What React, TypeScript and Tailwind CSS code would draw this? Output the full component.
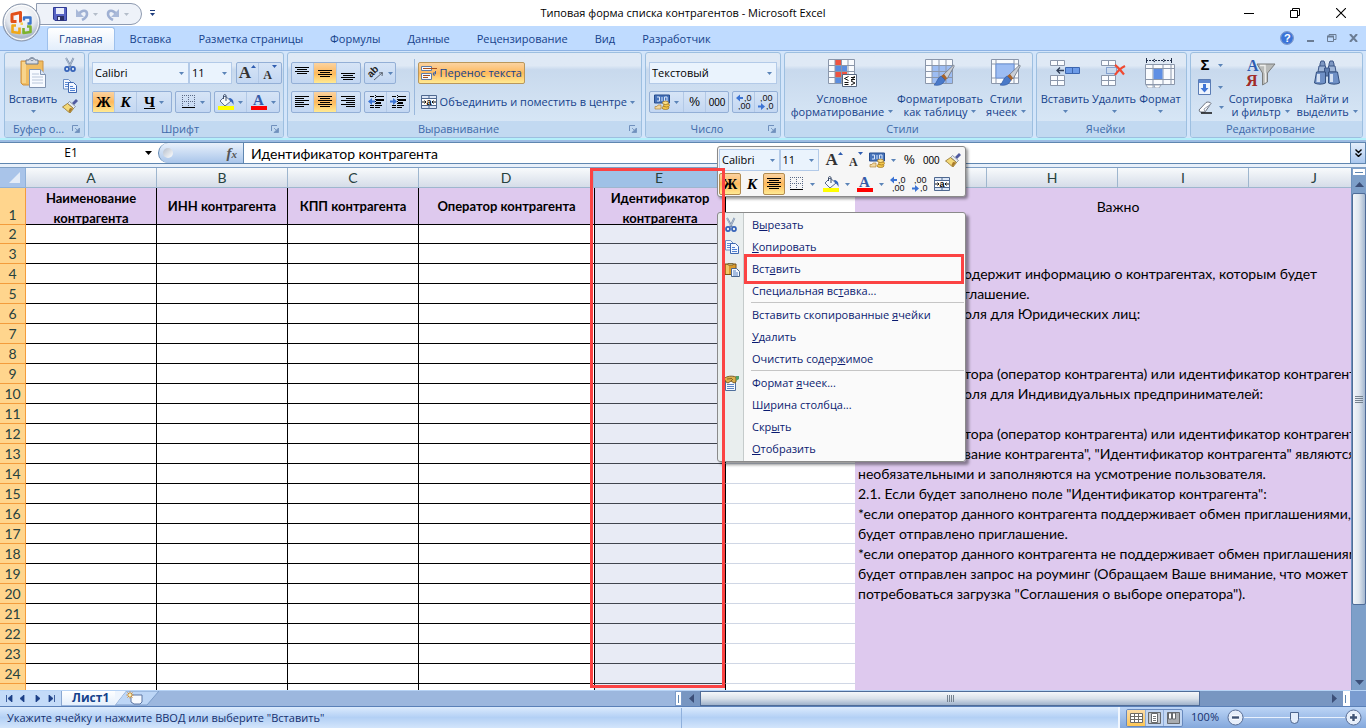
import type { ReactNode } from "react";
import clsx from "clsx";

/* ---------- Icons ---------- */

function Arrow({ className = "text-[#5b84b8]" }: { className?: string }) {
  return (
    <svg width="5" height="3" viewBox="0 0 5 3" className={clsx("shrink-0", className)}>
      <path d="M0 0h5L2.500 3z" fill="currentColor" />
    </svg>
  );
}

function OfficeLogo() {
  return (
    <svg width="39" height="39" viewBox="0 0 39 39">
      <defs>
        <radialGradient id="orb" cx="50%" cy="30%" r="75%">
          <stop offset="0" stopColor="#ffffff" />
          <stop offset="0.550" stopColor="#e3e7ee" />
          <stop offset="0.800" stopColor="#aab6c9" />
          <stop offset="1" stopColor="#f2f5fa" />
        </radialGradient>
      </defs>
      <circle cx="19.500" cy="19.500" r="18.500" fill="url(#orb)" stroke="#8592a8" />
      <circle cx="19.500" cy="19.500" r="17" fill="none" stroke="#fff" />
      <g fill="none" strokeLinejoin="round">
        <path d="M14.500 18.500h-4.500v-7l8.500-2v8.500h-1.500" stroke="#e2501a" strokeWidth="3" />
        <path d="M22 17.500v-3h6.500v6h-3" stroke="#3a74c9" strokeWidth="2.400" />
        <path d="M14 22.500h-3.500v6.500l7 1v-5.500" stroke="#f0a818" strokeWidth="2.600" />
        <path d="M21.500 25v5l7-1v-5.500h-3.500" stroke="#7db32e" strokeWidth="2.600" />
      </g>
      <path d="M18.500 19.500h2.500v2.500h-2.500z" fill="#f7d257" />
    </svg>
  );
}

function SaveIcon() {
  return (
    <svg width="14" height="14" viewBox="0 0 14 14">
      <path d="M.5.5h13v13H2L.5 12z" fill="#5763c4" stroke="#2f3a94" />
      <path d="M3 1h8v6H3z" fill="#e9edfb" />
      <path d="M4 9h7v4.500H4z" fill="#2b2f66" />
      <path d="M5 10h2v3H5z" fill="#dfe5f7" />
    </svg>
  );
}

function UndoIcon({ flip = false }: { flip?: boolean }) {
  return (
    <svg width="14" height="13" viewBox="0 0 14 13" className={flip ? "-scale-x-100" : ""}>
      <path d="M4 6C7 1.500 12 2 12 6c0 2.500-2 4.500-5 6" fill="none" stroke="#9fb0d3" strokeWidth="2.600" />
      <path d="M1 1v8h8z" fill="#a9b9d9" />
    </svg>
  );
}

function PasteIcon() {
  return (
    <svg width="28" height="32" viewBox="0 0 28 32">
      <path d="M2 4h22v24H4l-2-2z" fill="#f0bd62" stroke="#cf9140" />
      <path d="M3 5h4v21H3z" fill="#f8d48c" />
      <path d="M7 3h3c0-3 6-3 6 0h3v4H7z" fill="#d8dde5" stroke="#687890" />
      <circle cx="13" cy="2.500" r="1.200" fill="#fff" stroke="#687890" strokeWidth=".8" />
      <path d="M10.500 12.500h11l5 5v13h-16z" fill="#f7faff" stroke="#8093b0" />
      <path d="M21.500 12.500v5h5" fill="#dbe6f5" stroke="#8093b0" />
      <path d="M13 17h7M13 20h11M13 23h11M13 26h11" stroke="#b9c6da" />
    </svg>
  );
}

function PasteSmallIcon() {
  return (
    <svg width="16" height="15" viewBox="0 0 16 15">
      <path d="M1 2h11v10.500H1z" fill="#d99a2b" stroke="#7b5216" />
      <path d="M2 3h3v9H2z" fill="#f2c767" />
      <path d="M4 3V1.500h5V3z" fill="#f0e2a0" stroke="#6b5a2c" strokeWidth=".8" />
      <path d="M7.500 6.500h5l3 3v5h-8z" fill="#f2f7ff" stroke="#4a678f" />
      <path d="M9 9h3M9 11h5M9 13h5" stroke="#5a83c2" />
    </svg>
  );
}

function CutIcon() {
  return (
    <svg width="14" height="16" viewBox="0 0 14 16" fill="none">
      <path d="M3 1l5 9M10.500 1L6 10" stroke="#7388a8" strokeWidth="1.800" />
      <path d="M3 1l4 8M10.500 1L7 8" stroke="#dde5ef" strokeWidth=".6" />
      <ellipse cx="4" cy="12" rx="2" ry="2.200" stroke="#3562b8" strokeWidth="1.700" />
      <ellipse cx="10" cy="12" rx="2" ry="2.200" stroke="#3562b8" strokeWidth="1.700" />
    </svg>
  );
}

function CopyIcon() {
  return (
    <svg width="16" height="14" viewBox="0 0 16 14">
      <path d="M1.500.5h5L9 3v7H1.500z" fill="#f4f8ff" stroke="#6c8fc4" />
      <path d="M3 3.500h4M3 5.500h4M3 7.500h3" stroke="#5f8cd6" />
      <path d="M6.500 3.500h5l3 3v7h-8z" fill="#f4f8ff" stroke="#3f68b0" />
      <path d="M8 7.500h3M8 9.500h5M8 11.500h5" stroke="#4f80d2" />
    </svg>
  );
}

function BrushIcon() {
  return (
    <svg width="16" height="14" viewBox="0 0 16 14">
      <path d="M10 4L14 0l2 2-4 4z" fill="#4f5aa0" />
      <path d="M7.500 2.500l6 5-2 2-6-5z" fill="#e6eaf0" stroke="#6f7a8e" strokeWidth=".7" />
      <path d="M5.500 4.500l6 5L8 14C5 12 3 9.500.5 8z" fill="#f4d978" stroke="#8f6f26" strokeWidth=".8" />
      <path d="M8 9l-1.500 3L8 13.500 11 9.500z" fill="#a87a2c" />
    </svg>
  );
}

function BordersIcon() {
  return (
    <svg width="14" height="14" viewBox="0 0 14 14" shapeRendering="crispEdges">
      <path d="M.5 0v12M6.500 0v12M12.500 0v12M0 .5h13M0 6.500h13" stroke="#5b6a86" strokeDasharray="1 1" />
      <path d="M0 12.500h13" stroke="#000" />
    </svg>
  );
}

function FillIcon() {
  return (
    <svg width="16" height="16" viewBox="0 0 16 16">
      <path d="M7 2l6 5-6 5-5-5z" fill="#f4f8fd" stroke="#5b6c8c" />
      <path d="M8 7V2c0-2-2.500-2-2.500 0v3" fill="none" stroke="#3d4c68" />
      <path d="M11 4c3 0 5 2 4.500 7-1-2-2-3.500-3.500-4z" fill="#3566bd" />
      <path d="M0 12h16v4H0z" fill="#ffff00" />
    </svg>
  );
}

function FontColorIcon() {
  return (
    <span className="flex flex-col items-center w-4">
      <b className="font-['Liberation_Serif',serif] text-[15px] leading-[12px] h-3 text-[#355ba8]">A</b>
      <span className="w-4 h-1 bg-[#ff0000]" />
    </span>
  );
}

function Lines({ d }: { d: string }) {
  return (
    <svg width="15" height="14" viewBox="0 0 15 14" shapeRendering="crispEdges">
      <path d={d} stroke="#000" fill="none" />
    </svg>
  );
}

const LINES = {
  top: "M0 1.500h14M2 3.500h10M0 5.500h14M2 7.500h10",
  middle: "M0 4.500h14M2 6.500h10M0 8.500h14M2 10.500h10",
  bottom: "M0 7.500h14M2 9.500h10M0 11.500h14M2 13.500h10",
  left: "M0 1.500h14M0 3.500h9M0 5.500h14M0 7.500h9M0 9.500h14M0 11.500h9",
  center: "M0 1.500h14M2 3.500h10M0 5.500h14M2 7.500h10M0 9.500h14M2 11.500h10",
  right: "M0 1.500h14M5 3.500h9M0 5.500h14M5 7.500h9M0 9.500h14M5 11.500h9",
};

function OrientationIcon() {
  return (
    <svg width="16" height="16" viewBox="0 0 16 16" className="overflow-visible">
      <text x="0" y="10" transform="rotate(-45 5 8)" fontSize="10" fontWeight="bold" fill="#222" fontFamily="Liberation Sans">
        ab
      </text>
      <path d="M6 15l8-7M14.500 7.500l-3.500.5M14.500 7.500L14 11" stroke="#5b6472" fill="none" />
    </svg>
  );
}

function IndentIcon({ flip = false }: { flip?: boolean }) {
  return (
    <svg width="16" height="14" viewBox="0 0 16 14">
      <path d="M2 1.500h4M8 1.500h8M8 10.500h6M8 12.500h4M2 10.500h4M2 12.500h4" stroke="#000" />
      <path d="M8 5h8M8 8h5" stroke="#000" strokeWidth="2" />
      <path d="M7.500 0v14" stroke="#000" strokeDasharray="1 1" />
      <path d={flip ? "M7 6.500L3 3v2.500H0v2h3V10z" : "M0 6.500L4 3v2.500h3v2H4V10z"} fill="#3c74d4" />
    </svg>
  );
}

function WrapIcon() {
  return (
    <svg width="16" height="15" viewBox="0 0 16 15">
      <path d="M.5.5h10v4H.5zM.5 7.500h10v6H.5z" fill="#f5f9ff" stroke="#5f7aa4" />
      <path d="M2 2.500h14M2 9.500h7M2 11.500h5" stroke="#a8501c" />
      <path d="M14.500 5v3H12M13.500 6L12 8l1.500 2" fill="none" stroke="#3c62a8" />
    </svg>
  );
}

function MergeIcon() {
  return (
    <svg width="16" height="14" viewBox="0 0 16 14">
      <path d="M.5.5h15v13H.5z" fill="#dbe6f6" stroke="#4f688f" />
      <path d="M.5 3.500h15M.5 10.500h15M8 .5v3M8 10.500v3" stroke="#4f688f" />
      <path d="M1 4h14v6H1z" fill="#fff" />
      <path d="M1 7h4M3.500 5.500L5 7 3.500 8.500M15 7h-4M12.500 5.500L11 7l1.500 1.500" stroke="#111" fill="none" />
      <text x="5.500" y="9.500" fontSize="9" fontWeight="bold" fontFamily="Liberation Sans">
        a
      </text>
    </svg>
  );
}

function MoneyIcon() {
  return (
    <svg width="16" height="16" viewBox="0 0 16 16">
      <path d="M.5 1h15v8H.5z" fill="#4874bb" stroke="#274d8e" />
      <path d="M3 3h2.500v4H3M8 3v4M10.500 3H13v4h-2.500z" stroke="#d8e6fb" fill="none" />
      <path d="M1 12.500h2l1-1.500h3v4H1z" fill="#f2d8a0" stroke="#a8782a" strokeWidth=".6" />
      <ellipse cx="11.500" cy="13.800" rx="3.500" ry="1.700" fill="#f3c84c" stroke="#9c6f18" strokeWidth=".7" />
      <ellipse cx="12.500" cy="11.300" rx="3" ry="1.700" fill="#f3c84c" stroke="#9c6f18" strokeWidth=".7" />
      <ellipse cx="11.500" cy="8.800" rx="3" ry="1.700" fill="#fbe08a" stroke="#9c6f18" strokeWidth=".7" />
    </svg>
  );
}

function DecimalIcon({ less = false }: { less?: boolean }) {
  return (
    <svg width="16" height="16" viewBox="0 0 16 16" fontFamily="Liberation Sans" fontSize="9" fill="#111">
      <text x={less ? 2 : 8} y="7">{less ? ",00" : ",0"}</text>
      <text x={less ? 8 : 2} y="15">{less ? ",0" : ",00"}</text>
      {less ? (
        <path d="M0 11.500h3V9l4 3.500L3 16v-2.500H0z" fill="#3c74d4" />
      ) : (
        <path d="M7 3H4V.5L0 4l4 3.500V5h3z" fill="#3c74d4" />
      )}
    </svg>
  );
}

function PaintBrush() {
  return (
    <g>
      <path d="M19 17L29 7.500c1-.5 1.500 0 1 1L23 21z" fill="#c9ced6" stroke="#6d7480" strokeWidth=".8" />
      <path d="M17 18l3-2 3 4-2 3z" fill="#a8642c" />
      <path d="M17 18l4 4c-2 5-7 6-11 5 3-2 3-7 7-9z" fill="#4a79c8" stroke="#2d55a0" strokeWidth=".6" />
    </g>
  );
}

function CondFormatIcon() {
  return (
    <svg width="32" height="30" viewBox="0 0 32 30">
      <path d="M2.500 1.500h26v24h-26z" fill="#f9fbfe" stroke="#8b97ab" />
      <path d="M9 2h6v6H9zM9 14h12v6H9z" fill="#f05340" />
      <path d="M9 8h12v6H9zM9 20h6v5H9z" fill="#5a8de0" />
      <path d="M9 1.500v24M15.500 1.500v24M22 1.500v24M2.500 7.500h26M2.500 13.500h26M2.500 19.500h26" stroke="#8b97ab" />
      <path d="M16.500 16.500h14v12h-14z" fill="#fff" stroke="#54657f" />
      <path d="M22.500 18.500l-4 2 4 2M18.500 24.500h4M18.500 26.500h4M25 19.500h4M25 21.500h4M28.500 18l-3 5M25 23l4 2-4 2" stroke="#111" fill="none" />
    </svg>
  );
}

function FormatTableIcon() {
  return (
    <svg width="32" height="30" viewBox="0 0 32 30">
      <path d="M1.500 1.500h27v24h-27z" fill="#f9fbfe" stroke="#8b97ab" />
      <path d="M8 8h20v17H8z" fill="#9dbdf3" />
      <path d="M8 1.500v24M15 1.500v24M22 1.500v24M1.500 7.500h27M1.500 13.500h27M1.500 19.500h27" stroke="#8b97ab" />
      <PaintBrush />
    </svg>
  );
}

function CellStylesIcon() {
  return (
    <svg width="32" height="30" viewBox="0 0 32 30">
      <path d="M1.500 1.500h27v24h-27z" fill="#f9fbfe" stroke="#8b97ab" />
      <path d="M6 1.500v24M24 1.500v24M1.500 6h27M1.500 20h27" stroke="#8b97ab" />
      <path d="M6 6h18v14H6z" fill="#9dbdf3" stroke="#6c93d8" />
      <PaintBrush />
    </svg>
  );
}

function InsertCellsIcon() {
  return (
    <svg width="32" height="28" viewBox="0 0 32 28">
      <path d="M1.500 1.500h14v5h-14zM1.500 16.500h14v10h-14zM8.500 1.500v5M8.500 16.500v10M1.500 21.500h14" fill="#fafcff" stroke="#8b97ab" />
      <path d="M16.500 8.500h14v6h-14z" fill="#6c9be8" stroke="#3c66b0" />
      <path d="M23.500 8.500v6" stroke="#3c66b0" />
      <path d="M15 11.500H8M11 8.500l-3 3 3 3" stroke="#2f3e58" strokeWidth="1.300" fill="none" />
    </svg>
  );
}

function DeleteCellsIcon() {
  return (
    <svg width="30" height="28" viewBox="0 0 30 28">
      <path d="M2.500 1.500h14v5h-14zM2.500 16.500h14v10h-14zM9.500 1.500v5M9.500 16.500v10M2.500 21.500h14" fill="#fafcff" stroke="#8b97ab" />
      <path d="M7.500 8.500h10v6h-10z" fill="none" stroke="#3c66b0" strokeDasharray="1 1" />
      <path d="M16 6c3 2 7 7 9 9.500M26 7c-4 2-8 6-10 9" stroke="#f04a32" strokeWidth="2.200" fill="none" />
    </svg>
  );
}

function FormatCellsIcon() {
  return (
    <svg width="32" height="30" viewBox="0 0 32 30">
      <path d="M2 2.500h26" stroke="#24324c" strokeDasharray="2 1" />
      <path d="M2.500 0v5M27.500 0v5M11 1l-2 1.500L11 4M19 1l2 1.500L19 4" stroke="#24324c" fill="none" />
      <path d="M1.500 6.500h29v20h-29z" fill="#f9fbfe" stroke="#8b97ab" />
      <path d="M9 6.500v20M19 6.500v20M27 6.500v20M1.500 10.500h29M1.500 21.500h29" stroke="#8b97ab" />
      <path d="M9.500 11h9v10h-9z" fill="#5f8fe4" />
      <path d="M2 27h7v3H4zM10 27h7l-2 3h-4z" fill="#fff" stroke="#8b97ab" strokeWidth=".8" />
    </svg>
  );
}

function FillDownIcon() {
  return (
    <svg width="14" height="16" viewBox="0 0 14 16">
      <path d="M.5.5h12v15H.5z" fill="#eef4fd" stroke="#5a7cb4" />
      <path d="M1 1h11v3H1z" fill="#5e86cf" />
      <path d="M5 5h3v4h2.500l-4 4.500-4-4.500H5z" fill="#3f74d6" />
    </svg>
  );
}

function EraserIcon() {
  return (
    <svg width="15" height="13" viewBox="0 0 15 13">
      <path d="M1 9l7-7.500c1-.8 5-.5 5 1L7 11H2z" fill="#fdfdfd" stroke="#6d7480" />
      <path d="M7 11l-1-3 7-5" fill="none" stroke="#9aa2b0" />
      <path d="M3 12h11" stroke="#111" strokeWidth="1.500" />
    </svg>
  );
}

function SortIcon() {
  return (
    <svg width="30" height="30" viewBox="0 0 30 30" fontFamily="Liberation Serif" fontWeight="bold" fontSize="16">
      <text x="1" y="13" fill="#2f5db0">A</text>
      <text x="0" y="28" fill="#a12c28">Я</text>
      <path d="M11 6h18L21.500 15v9l-5 3V15z" fill="#b9bbb9" stroke="#7b7d7c" />
      <path d="M14 7.500h5v7l.5 1v9" fill="none" stroke="#eeeeec" strokeWidth="1.500" />
    </svg>
  );
}

function BinocularsIcon() {
  return (
    <svg width="30" height="28" viewBox="0 0 30 28">
      <path d="M8 5l1-3h3l1 3v3H8zM17 5l1-3h3l1 3v3h-5z" fill="#7d97c2" stroke="#3d5687" />
      <path d="M6 13l1-6h6.500v6zM16.500 7H23l1 6h-7.500z" fill="#9fb6d8" stroke="#3d5687" />
      <path d="M12.500 9h5v8h-5z" fill="#5d7cae" stroke="#3d5687" />
      <path d="M4.500 13h9v11c-3 1.500-8 1.500-11 0zM16.500 13h9l2 11c-3 1.500-8 1.500-11 0z" fill="#6f90c6" stroke="#34507f" />
      <path d="M5 15h3v8H4.500zM18 15h3v8h-3z" fill="#d3e0f3" />
    </svg>
  );
}

function FormatHandIcon() {
  return (
    <svg width="16" height="16" viewBox="0 0 16 16">
      <path d="M1.500 4.500h10v11h-10z" fill="#f5f9ff" stroke="#4f6f9c" />
      <path d="M3 9.500h7M3 11.500h7M3 13.500h7" stroke="#5a83c2" />
      <path d="M0 3.500C3 1 8 .5 12 2v5l-2 1-3-2-3 2-2-1z" fill="#dcb04c" stroke="#6f501c" strokeWidth=".9" />
      <path d="M3 4l5-.5M7 6l2-2" stroke="#6f501c" strokeWidth=".8" />
      <path d="M12 1h3v3l-3 2z" fill="#51a06c" />
    </svg>
  );
}

function Launcher() {
  return (
    <button type="button" aria-label="Параметры" className="absolute right-1 top-1">
      <svg width="8" height="8" viewBox="0 0 8 8">
        <path d="M.5 6V.5H6" fill="none" stroke="#7090bd" />
        <path d="M3 3l2 2M7.500 3v4.500H3z" fill="#7090bd" stroke="#7090bd" strokeWidth=".8" />
      </svg>
    </button>
  );
}

/* ---------- Ribbon parts ---------- */

const HOT = "bg-linear-to-b from-[#fbd3a0] via-[#fdb95c] to-[#ffea92]";

interface GroupProps {
  title: string;
  width: string;
  launcher?: boolean;
  children: ReactNode;
}

function Group({ title, width, launcher, children }: GroupProps) {
  return (
    <section
      className={clsx(
        "shrink-0 flex flex-col rounded-[3px] border border-[#9dbfe0] bg-linear-to-b from-[#dfe9f5] from-15% via-[#c8d9ed] via-20% to-[#dbeaf8] overflow-hidden",
        width
      )}
    >
      <div className="flex-1 flex px-[3px]">{children}</div>
      <div className="relative h-4 bg-[#c2d9f1] text-center text-[#3e6aaa] leading-4 whitespace-nowrap pr-3">
        {title}
        {launcher && <Launcher />}
      </div>
    </section>
  );
}

function Box({ children }: { children: ReactNode }) {
  return (
    <div className="flex h-[22px] rounded-[2px] border border-[#93afd6] bg-linear-to-b from-[#d6e4f6] to-[#c3d7f2] divide-x divide-[#b3c9e6]">
      {children}
    </div>
  );
}

interface ToolProps {
  label: string;
  width?: string;
  active?: boolean;
  arrow?: boolean;
  children: ReactNode;
}

function Tool({ label, width = "w-[22px]", active, arrow, children }: ToolProps) {
  return (
    <button
      type="button"
      aria-label={label}
      className={clsx("flex items-center justify-center gap-1", width, active && HOT)}
    >
      {children}
      {arrow && <Arrow />}
    </button>
  );
}

interface ComboProps {
  label: string;
  value: string;
  width: string;
}

function Combo({ label, value, width }: ComboProps) {
  return (
    <label className={clsx("relative flex h-[22px] items-center border border-[#b3cae8] bg-[#eaf3fd]", width)}>
      <select aria-label={label} className="appearance-none w-full h-full pl-0.5 text-black outline-none">
        <option>{value}</option>
      </select>
      <span className="absolute right-1 pointer-events-none">
        <Arrow />
      </span>
    </label>
  );
}

interface BigButtonProps {
  icon: ReactNode;
  lines: string[];
  width?: string;
}

function BigButton({ icon, lines, width }: BigButtonProps) {
  return (
    <button type="button" className={clsx("flex flex-col items-center pt-1 text-[#15428b] whitespace-nowrap", width)}>
      <span className="h-8 flex items-center justify-center">{icon}</span>
      <span className="mt-[3px] leading-[13px]">{lines[0]}</span>
      <span className="flex h-[13px] items-center justify-center gap-1 leading-[13px]">
        {lines[1]}
        <Arrow />
      </span>
    </button>
  );
}

function SerifGlyph({ children, className }: { children: ReactNode; className?: string }) {
  return (
    <b className={clsx("font-['Liberation_Serif',serif] text-[15px] leading-4 text-black", className)}>{children}</b>
  );
}

function GrowFont({ small = false }: { small?: boolean }) {
  return (
    <span className="flex h-4 items-start">
      <b
        className={clsx(
          "self-end font-['Liberation_Serif',serif] text-[#333]",
          small ? "text-[12px] leading-3" : "text-[17px] leading-4"
        )}
      >
        A
      </b>
      <Arrow className={clsx("text-[#2f5db0]", !small && "rotate-180")} />
    </span>
  );
}

/* ---------- Window top ---------- */

function TitleBar() {
  return (
    <header className="relative h-[26px] shrink-0 bg-white flex items-center">
      <div className="ml-9 mt-0.5 flex h-[22px] w-[106px] items-center gap-1.5 rounded-r-full border border-[#8f9bb0] bg-[#eef2f9] pl-4">
        <button type="button" aria-label="Сохранить"><SaveIcon /></button>
        <button type="button" aria-label="Отменить" className="ml-0.5 flex items-center gap-1">
          <UndoIcon />
          <Arrow className="text-[#b4bdca]" />
        </button>
        <button type="button" aria-label="Вернуть" className="ml-0.5 flex items-center gap-1">
          <UndoIcon flip />
          <Arrow className="text-[#b4bdca]" />
        </button>
      </div>
      <button type="button" aria-label="Настройка панели" className="ml-2 flex flex-col items-center gap-0.5">
        <span className="w-[5px] h-px bg-[#1e3c7c]" />
        <Arrow className="text-[#1e3c7c]" />
      </button>
      <h1 className="absolute inset-x-0 text-center text-[11px] text-black pointer-events-none">
        Типовая форма списка контрагентов - Microsoft Excel
      </h1>
      <div className="ml-auto flex items-center gap-9 pr-5">
        <button type="button" aria-label="Свернуть">
          <svg width="10" height="10" viewBox="0 0 10 10"><path d="M0 5.500h10" stroke="#000" /></svg>
        </button>
        <button type="button" aria-label="Восстановить">
          <svg width="10" height="10" viewBox="0 0 10 10" fill="none" stroke="#000"><path d="M.5 2.500h7v7h-7zM2.500 2V.5h7v7H8" /></svg>
        </button>
        <button type="button" aria-label="Закрыть">
          <svg width="10" height="10" viewBox="0 0 10 10"><path d="M0 0l10 10M10 0L0 10" stroke="#000" strokeWidth="1.100" /></svg>
        </button>
      </div>
    </header>
  );
}

const TABS = ["Главная", "Вставка", "Разметка страницы", "Формулы", "Данные", "Рецензирование", "Вид", "Разработчик"];

function RibbonTabs() {
  return (
    <nav className="h-6 shrink-0 bg-[#bfdbff] flex items-end pl-[47px] pr-2">
      <div className="flex gap-[3px]">
        {TABS.map((tab, i) => (
          <button
            key={tab}
            type="button"
            className={clsx(
              "h-[23px] text-[#15428b]",
              i === 0
                ? "rounded-t-[3px] border border-b-0 border-[#9dc0ec] bg-linear-to-b from-white to-[#e3eefb] px-[11px]"
                : "px-3 pt-px"
            )}
          >
            {tab}
          </button>
        ))}
      </div>
      <div className="ml-auto flex h-full items-center gap-3">
        <button type="button" aria-label="Справка">
          <svg width="14" height="14" viewBox="0 0 14 14">
            <circle cx="7" cy="7" r="6.500" fill="#3b74d8" stroke="#e9f1fc" />
            <circle cx="7" cy="7" r="6.500" fill="none" stroke="#2c56a4" strokeWidth=".6" />
            <text x="4" y="11" fontSize="11" fontWeight="bold" fill="#fff" fontFamily="Liberation Sans">?</text>
          </svg>
        </button>
        <button type="button" aria-label="Свернуть книгу">
          <svg width="9" height="8" viewBox="0 0 9 8"><path d="M1 7h7" stroke="#6b7c93" strokeWidth="2" /></svg>
        </button>
        <button type="button" aria-label="Восстановить книгу">
          <svg width="10" height="8" viewBox="0 0 10 8" fill="none" stroke="#6b7c93"><path d="M.5 2.500h6v5h-6zM2 2V.5h7v5H7" /><path d="M0 2.500h7" strokeWidth="2" /></svg>
        </button>
        <button type="button" aria-label="Закрыть книгу">
          <svg width="9" height="8" viewBox="0 0 9 8"><path d="M1 0l7 8M8 0L1 8" stroke="#6b7c93" strokeWidth="2" /></svg>
        </button>
      </div>
    </nav>
  );
}

function Ribbon() {
  return (
    <div className="h-[92px] shrink-0 border-t border-[#8db2e3] bg-[#d3e5fa] pt-px px-1 pb-[3px] border-b-2 border-b-[#9dbce2] shadow-[inset_0_-2px_0_#b4f0fb]">
      <div className="flex gap-[3px] h-[86px]">
        <Group title="Буфер о..." width="w-[81px]" launcher>
          <BigButton icon={<PasteIcon />} lines={["Вставить"]} width="w-[50px]" />
          <div className="ml-1 flex flex-col items-center gap-1.5 pt-1">
            <button type="button" aria-label="Вырезать"><CutIcon /></button>
            <button type="button" aria-label="Копировать"><CopyIcon /></button>
            <button type="button" aria-label="Формат по образцу"><BrushIcon /></button>
          </div>
        </Group>

        <Group title="Шрифт" width="w-[196px]" launcher>
          <div className="flex flex-col gap-[7px] pt-[9px]">
            <div className="flex">
              <Combo label="Шрифт" value="Calibri" width="w-[97px]" />
              <Combo label="Размер шрифта" value="11" width="w-[43px] mr-1" />
              <Box>
                <Tool label="Увеличить размер шрифта"><GrowFont /></Tool>
                <Tool label="Уменьшить размер шрифта"><GrowFont small /></Tool>
              </Box>
            </div>
            <div className="flex gap-[3px]">
              <Box>
                <Tool label="Полужирный" active><SerifGlyph>Ж</SerifGlyph></Tool>
                <Tool label="Курсив"><SerifGlyph className="italic">К</SerifGlyph></Tool>
                <Tool label="Подчеркнутый" width="w-[34px]" arrow><SerifGlyph className="underline">Ч</SerifGlyph></Tool>
              </Box>
              <Box>
                <Tool label="Границы" width="w-[34px]" arrow><BordersIcon /></Tool>
              </Box>
              <Box>
                <Tool label="Цвет заливки" width="w-[32px]" arrow><FillIcon /></Tool>
                <Tool label="Цвет текста" width="w-[32px]" arrow><FontColorIcon /></Tool>
              </Box>
            </div>
          </div>
        </Group>

        <Group title="Выравнивание" width="w-[355px]" launcher>
          <div className="flex flex-col gap-[7px] pt-[9px] pr-1">
            <div className="flex gap-[3px]">
              <Box>
                <Tool label="По верхнему краю"><Lines d={LINES.top} /></Tool>
                <Tool label="По середине" width="w-[23px]" active><Lines d={LINES.middle} /></Tool>
                <Tool label="По нижнему краю" width="w-[23px]"><Lines d={LINES.bottom} /></Tool>
              </Box>
              <Box>
                <Tool label="Ориентация" width="w-[30px]" arrow><OrientationIcon /></Tool>
              </Box>
            </div>
            <div className="flex gap-[3px]">
              <Box>
                <Tool label="По левому краю"><Lines d={LINES.left} /></Tool>
                <Tool label="По центру" width="w-[23px]" active><Lines d={LINES.center} /></Tool>
                <Tool label="По правому краю" width="w-[23px]"><Lines d={LINES.right} /></Tool>
              </Box>
              <Box>
                <Tool label="Уменьшить отступ"><IndentIcon /></Tool>
                <Tool label="Увеличить отступ"><IndentIcon flip /></Tool>
              </Box>
            </div>
          </div>
          <div className="mt-1.5 h-14 w-px bg-[#9ab8dc]" />
          <div className="flex flex-col items-start gap-[7px] pt-[9px] pl-[3px] text-[#15428b] whitespace-nowrap">
            <button type="button" className={clsx("flex h-[22px] items-center gap-[3px] rounded-[2px] border border-[#b9975c] px-0.5", HOT)}>
              <WrapIcon />
              Перенос текста
            </button>
            <button type="button" className="flex h-[22px] items-center gap-[3px] px-[3px]">
              <MergeIcon />
              Объединить и поместить в центре
              <Arrow />
            </button>
          </div>
        </Group>

        <Group title="Число" width="w-[136px]" launcher>
          <div className="flex flex-col gap-[7px] pt-[9px]">
            <Combo label="Числовой формат" value="Текстовый" width="w-[128px]" />
            <div className="flex gap-[3px]">
              <Box>
                <Tool label="Финансовый формат" width="w-[34px]" arrow><MoneyIcon /></Tool>
                <Tool label="Процентный формат">
                  <span className="font-['Liberation_Sans',sans-serif] text-xs text-black">%</span>
                </Tool>
                <Tool label="Формат с разделителями">
                  <span className="font-['Liberation_Sans',sans-serif] text-[10px] text-black">000</span>
                </Tool>
              </Box>
              <Box>
                <Tool label="Увеличить разрядность"><DecimalIcon /></Tool>
                <Tool label="Уменьшить разрядность"><DecimalIcon less /></Tool>
              </Box>
            </div>
          </div>
        </Group>

        <Group title="Стили" width="w-[249px]">
          <BigButton icon={<CondFormatIcon />} lines={["Условное", "форматирование"]} width="w-[108px]" />
          <BigButton icon={<FormatTableIcon />} lines={["Форматировать", "как таблицу"]} width="w-[88px]" />
          <BigButton icon={<CellStylesIcon />} lines={["Стили", "ячеек"]} width="w-[44px]" />
        </Group>

        <Group title="Ячейки" width="w-[151px]">
          <BigButton icon={<InsertCellsIcon />} lines={["Вставить"]} width="w-[50px]" />
          <BigButton icon={<DeleteCellsIcon />} lines={["Удалить"]} width="w-[48px]" />
          <BigButton icon={<FormatCellsIcon />} lines={["Формат"]} width="w-[44px]" />
        </Group>

        <Group title="Редактирование" width="w-[173px]">
          <div className="flex w-8 flex-col gap-1.5 pl-1 pt-1">
            <button type="button" aria-label="Сумма" className="flex items-center gap-1.5">
              <b className="w-3.5 text-center font-['Liberation_Sans',sans-serif] text-[15px] leading-4 text-black">Σ</b>
              <Arrow />
            </button>
            <button type="button" aria-label="Заполнить" className="flex items-center gap-1.5"><FillDownIcon /><Arrow /></button>
            <button type="button" aria-label="Очистить" className="flex items-center gap-1.5"><EraserIcon /><Arrow /></button>
          </div>
          <BigButton icon={<SortIcon />} lines={["Сортировка", "и фильтр"]} width="w-[70px]" />
          <BigButton icon={<BinocularsIcon />} lines={["Найти и", "выделить"]} width="w-[64px]" />
        </Group>
      </div>
    </div>
  );
}

function FormulaBar() {
  return (
    <div className="shrink-0 border-b border-[#7f9fc4] bg-[#e8f0fa] pb-[3px]">
      <div className="flex h-[22px] border-y border-[#5f86b0] bg-white text-black">
        <label className="relative flex w-[158px] items-center">
          <input aria-label="Имя" defaultValue="E1" className="w-full pr-4 text-center text-xs outline-none" />
          <svg width="7" height="4" viewBox="0 0 7 4" className="absolute right-1.5"><path d="M0 0h7L3.500 4z" /></svg>
        </label>
        <div className="flex w-[86px] items-center justify-between rounded-l-full border-x border-[#5f86b0] bg-linear-to-b from-[#e9f1fb] to-[#a9c5ea] pl-1 pr-1.5">
          <span className="size-2.5 rounded-full bg-linear-to-br from-[#b6bfcc] to-white" />
          <button type="button" aria-label="Вставить функцию" className="font-['Liberation_Serif',serif] text-[15px] leading-4 font-bold italic text-[#555]">
            f<span className="text-[11px]">x</span>
          </button>
        </div>
        <input
          aria-label="Строка формул"
          defaultValue="Идентификатор контрагента"
          className="min-w-0 flex-1 pl-[7px] font-[Lato,'Noto_Sans',sans-serif] text-[14px] outline-none"
        />
        <button type="button" aria-label="Развернуть строку формул" className="flex w-4 items-center justify-center border-x border-[#5f86b0] bg-linear-to-b from-[#e4eefb] to-[#a9c7ee]">
          <svg width="7" height="8" viewBox="0 0 7 8" fill="none" stroke="#000" strokeWidth="1.400"><path d="M.5.5l3 3 3-3M.5 4.500l3 3 3-3" /></svg>
        </button>
      </div>
    </div>
  );
}

/* ---------- Sheet ---------- */

const COLUMNS = ["A", "B", "C", "D", "E", "F", "G", "H", "I", "J"];
const LAST_ROW = 24;
const ROWS = Array.from({ length: LAST_ROW }, (_, i) => i + 2);

// Lines whose beginning lies under the context menu start with "~"
const NOTES: Record<number, string> = {
  4: "~одержит информацию о контрагентах, которым будет",
  5: "~глашение.",
  6: "~оля для Юридических лиц:",
  9: "~тора (оператор контрагента) или идентификатор контрагента",
  10: "~оля для Индивидуальных предпринимателей:",
  12: "~тора (оператор контрагента) или идентификатор контрагента",
  13: "~вание контрагента\", \"Идентификатор контрагента\" являются",
  14: "необязательными и заполняются на усмотрение пользователя.",
  15: "2.1. Если будет заполнено поле \"Идентификатор контрагента\":",
  16: "*если оператор данного контрагента поддерживает обмен приглашениями,",
  17: "будет отправлено приглашение.",
  18: "*если оператор данного контрагента не поддерживает обмен приглашениями,",
  19: "будет отправлен запрос на роуминг (Обращаем Ваше внимание, что может",
  20: "потребоваться загрузка \"Соглашения о выборе оператора\").",
};

const TITLE_CELL = "border-b border-black bg-[#dec9ee] p-0 text-center text-[13px] font-bold";
const SIDE_CELL = "border-l border-r border-b border-l-black border-b-[#d0d7e5] border-r-[#dec9ee] p-0";

function Sheet() {
  return (
    <div className="relative min-w-0 flex-1 overflow-hidden bg-white">
      <table className="w-[1380px] table-fixed border-separate border-spacing-0 font-[Lato,'Noto_Sans',sans-serif] text-[14px] leading-[18px] text-black">
        <colgroup>
          <col className="w-[26px]" />
          {COLUMNS.map((c) => (
            <col key={c} className={c === "D" ? "w-[175px]" : "w-[131px]"} />
          ))}
        </colgroup>
        <thead>
          <tr className="h-5">
            <th className="border-r border-b border-[#8fb0d8] bg-[#a9c4e9] p-0">
              <svg width="12" height="12" viewBox="0 0 12 12" className="ml-auto mr-1"><path d="M11 0v11H0z" fill="#e4ecf7" /></svg>
            </th>
            {COLUMNS.map((c) => (
              <th
                key={c}
                className={clsx(
                  "border-r border-b border-[#9eb6ce] p-0 font-normal text-[#27413e]",
                  c === "E" ? "bg-[#9fc1e6]" : "bg-linear-to-b from-[#f8fafc] to-[#d5dde8]"
                )}
              >
                {c}
              </th>
            ))}
          </tr>
        </thead>
        <tbody>
          <tr className="h-[37px]">
            <th className="border-r border-b border-[#f39c3c] bg-[#ffd58d] p-0 align-bottom font-normal text-[#27413e]">1</th>
            <td className={clsx(TITLE_CELL, "border-r")}>
              <div className="h-9 overflow-hidden leading-5">Наименование<br />контрагента</div>
            </td>
            <td className={clsx(TITLE_CELL, "border-r")}>ИНН контрагента</td>
            <td className={clsx(TITLE_CELL, "border-r")}>КПП контрагента</td>
            <td className={TITLE_CELL}>Оператор контрагента</td>
            <td className={clsx(TITLE_CELL, "border-l")}>
              <div className="h-9 overflow-hidden leading-5">Идентификатор<br />контрагента</div>
            </td>
            <td className={SIDE_CELL} />
            <td colSpan={4} className="bg-[#dec9ee] p-0 text-center">Важно</td>
          </tr>
          {ROWS.map((row) => {
            const note = NOTES[row];
            return (
              <tr key={row} className={row === 2 ? "h-[19px]" : "h-5"}>
                <th className="border-r border-b border-[#f39c3c] bg-[#ffd58d] p-0 font-normal text-[#27413e]">
                  {row <= LAST_ROW && row}
                </th>
                <td className="border-r border-b border-black" />
                <td className="border-r border-b border-black" />
                <td className="border-r border-b border-black" />
                <td className="border-b border-black" />
                <td className="border-l border-b border-black border-b-[#3f434c] bg-[#e8ebf5]" />
                <td className={SIDE_CELL} />
                <td colSpan={4} className={clsx("whitespace-nowrap bg-[#dec9ee] p-0", note?.startsWith("~") ? "pl-[108px]" : "pl-0.5")}>
                  {note?.replace("~", "")}
                </td>
              </tr>
            );
          })}
        </tbody>
      </table>
    </div>
  );
}

function VerticalScroll() {
  return (
    <div className="flex w-[15px] shrink-0 flex-col items-center border-l border-[#6f92bd] bg-[#7d9fc9]">
      <div className="my-px flex h-1.5 w-3 items-center justify-center bg-white"><span className="h-px w-2 bg-[#5f86b0]" /></div>
      <button type="button" aria-label="Прокрутить вверх" className="flex h-[17px] items-center">
        <svg width="9" height="5" viewBox="0 0 9 5"><path d="M0 5h9L4.500 0z" fill="#3c4f78" /></svg>
      </button>
      <div className="flex w-full basis-[412px] flex-col items-center justify-center gap-px rounded-[2px] border border-[#4f6c98] bg-linear-to-r from-[#f2f5f9] via-[#dfe6ee] to-[#a5b8d0]">
        {[0, 1, 2, 3].map((i) => (
          <span key={i} className="h-px w-2 bg-[#75828f]" />
        ))}
      </div>
      <button type="button" aria-label="Прокрутить вниз" className="mt-auto flex h-4 items-center">
        <svg width="9" height="5" viewBox="0 0 9 5"><path d="M0 0h9L4.500 5z" fill="#3c4f78" /></svg>
      </button>
    </div>
  );
}

const NAV = ["M1.500 0v7M7 0L3 3.500 7 7z", "M5 0L1 3.500 5 7z", "M2 0l4 3.500L2 7z", "M1 0l4 3.500L1 7zM6.500 0v7"];
const NAV_LABELS = ["Первый лист", "Предыдущий лист", "Следующий лист", "Последний лист"];

function SheetTabs() {
  return (
    <div className="flex h-4 shrink-0 border-t border-[#b7d3f5] bg-[#9cb7de]">
      <div className="flex w-[675px] shrink-0">
        <div className="flex w-[62px] items-center justify-around border-r border-[#8aa7d0] bg-[#c4dbf8] px-0.5">
          {NAV.map((d, i) => (
            <button key={d} type="button" aria-label={NAV_LABELS[i]}>
              <svg width="8" height="7" viewBox="0 0 8 7"><path d={d} fill="#1c3f86" stroke="#1c3f86" strokeWidth=".8" /></svg>
            </button>
          ))}
        </div>
        <button type="button" className="h-[14px] bg-linear-to-b from-white to-[#e4effc] pl-2.5 pr-1.5 text-xs leading-[14px] font-bold text-[#15428b]">
          Лист1
        </button>
        <button type="button" aria-label="Вставить лист">
          <svg width="44" height="15" viewBox="0 0 44 15">
            <path d="M0 14L11 0h33L32 14z" fill="#bdd6f6" stroke="#7c9cc9" />
            <path d="M0 14L11 0H0z" fill="#eef5fe" />
            <path d="M16 4h11v7l-2 2h-6l-3-2z" fill="#f7faff" stroke="#5c76a4" />
            <path d="M15 .5v7M11.500 4h7M12.500 1.500l5 5M17.500 1.500l-5 5" stroke="#d98a20" />
            <circle cx="15" cy="4" r="1.500" fill="#fff2b0" />
          </svg>
        </button>
      </div>
      <div className="flex w-[7px] items-center justify-center border border-[#7c9cc9] bg-white"><span className="h-2 w-px bg-[#5f86b0]" /></div>
      <div className="flex flex-1 items-center bg-[#7896c1]">
        <button type="button" aria-label="Прокрутить влево" className="flex w-[18px] justify-center">
          <svg width="5" height="9" viewBox="0 0 5 9"><path d="M5 0v9L0 4.500z" fill="#3c4f78" /></svg>
        </button>
        <div className="flex h-full basis-[500px] items-center justify-center gap-px border border-[#4f6c98] bg-linear-to-b from-[#f5f7fa] via-[#d9e1ea] to-[#9fb2cb]">
          {[0, 1, 2, 3].map((i) => (
            <span key={i} className="h-[7px] w-px bg-[#75828f]" />
          ))}
        </div>
        <button type="button" aria-label="Прокрутить вправо" className="ml-auto mr-1.5">
          <svg width="5" height="9" viewBox="0 0 5 9"><path d="M0 0v9l5-4.500z" fill="#3c4f78" /></svg>
        </button>
      </div>
      <div className="flex w-[7px] items-center bg-white"><span className="ml-0.5 h-2 w-px bg-[#5f86b0]" /></div>
      <div className="w-4 bg-[#7a9cd0]" />
    </div>
  );
}

function ZoomButton({ label, d }: { label: string; d: string }) {
  return (
    <button type="button" aria-label={label}>
      <svg width="17" height="17" viewBox="0 0 17 17">
        <circle cx="8.500" cy="8.500" r="7.500" fill="#e6eefa" stroke="#5a6f96" />
        <path d={d} stroke="#fff" strokeWidth="4.500" />
        <path d={d} stroke="#3f5375" strokeWidth="2.400" />
      </svg>
    </button>
  );
}

function StatusBar() {
  return (
    <footer className="flex h-[22px] shrink-0 items-center border-t border-[#5a80b8] bg-linear-to-b from-[#dcebfd] via-[#b3d0f5] to-[#d3e5fb] text-[#15306e]">
      <p className="w-[682px] border-r border-[#8fb0dc] pl-[7px] leading-[20px]">
        Укажите ячейку и нажмите ВВОД или выберите "Вставить"
      </p>
      <div className="ml-auto flex h-full items-center border-l-2 border-[#f0f6fe] bg-linear-to-b from-[#bcd5f6] to-[#84a8dc] pl-1.5">
        <div className="flex h-[18px] overflow-hidden rounded-[2px] border border-[#6688bd] divide-x divide-[#90add8] bg-[#c2d6f2]">
          <button type="button" aria-label="Обычный" className="flex w-[19px] items-center justify-center bg-linear-to-b from-[#fbdca6] to-[#fdc652]">
            <svg width="13" height="10" viewBox="0 0 13 10"><path d="M.5.500h12v9H.5zM4.500.500v9M8.500.500v9M.5 3.500h12M.5 6.500h12" fill="#fff" stroke="#6c6a66" /></svg>
          </button>
          <button type="button" aria-label="Разметка страницы" className="flex w-[18px] items-center justify-center">
            <svg width="13" height="12" viewBox="0 0 13 12"><path d="M.5.5h12v11H.5z" fill="#c5c9ce" stroke="#66696d" /><path d="M3.500 1.500h6v9h-6z" fill="#fff" stroke="#66696d" /><path d="M5 4.500h3M5 6.500h3M5 8.500h3" stroke="#77797c" /></svg>
          </button>
          <button type="button" aria-label="Страничный" className="flex w-[18px] items-center justify-center">
            <svg width="13" height="12" viewBox="0 0 13 12"><path d="M.5.5h12v11H.5z" fill="#a9acb0" stroke="#66696d" /><path d="M1.500 1h3v6h-3zM5.500 1h3v6h-3z" fill="#fff" stroke="#66696d" /></svg>
          </button>
        </div>
        <button type="button" className="px-2">100%</button>
        <ZoomButton label="Уменьшить" d="M5 8.500h7" />
        <input
          type="range"
          aria-label="Масштаб"
          defaultValue={50}
          className="w-[101px] h-4 appearance-none bg-[linear-gradient(#e8f1fd,#e8f1fd)] bg-[length:100%_1px] bg-center bg-no-repeat [&::-webkit-slider-thumb]:appearance-none [&::-webkit-slider-thumb]:h-3 [&::-webkit-slider-thumb]:w-[9px] [&::-webkit-slider-thumb]:border [&::-webkit-slider-thumb]:border-[#4c658f] [&::-webkit-slider-thumb]:rounded-b-full [&::-webkit-slider-thumb]:bg-[#e3edfb]"
        />
        <ZoomButton label="Увеличить" d="M5 8.500h7M8.500 5v7" />
        <span className="w-1" />
      </div>
    </footer>
  );
}

/* ---------- Floating panels ---------- */

function MiniTool({ label, active, width = "w-[22px]", children, arrow }: ToolProps) {
  return (
    <button
      type="button"
      aria-label={label}
      className={clsx("flex h-[22px] items-center justify-center gap-1.5", width, active && HOT, active && "rounded-[2px] border border-[#b28c50]")}
    >
      {children}
      {arrow && <Arrow />}
    </button>
  );
}

function MiniToolbar() {
  return (
    <div className="absolute left-[717px] top-[146px] w-[249px] rounded-[3px] border border-[#8a8a8a] bg-[#f6f6f6] p-px pb-0 shadow-[2px_2px_3px_rgba(0,0,0,0.4)]">
      <div className="flex h-6 items-center text-black">
        <Combo label="Шрифт" value="Calibri" width="w-[61px]" />
        <Combo label="Размер шрифта" value="11" width="w-[40px] mr-1" />
        <MiniTool label="Увеличить размер шрифта"><GrowFont /></MiniTool>
        <MiniTool label="Уменьшить размер шрифта"><GrowFont small /></MiniTool>
        <MiniTool label="Финансовый формат" width="w-[32px]" arrow><MoneyIcon /></MiniTool>
        <MiniTool label="Процентный формат"><span className="font-['Liberation_Sans',sans-serif] text-xs">%</span></MiniTool>
        <MiniTool label="Формат с разделителями"><span className="font-['Liberation_Sans',sans-serif] text-[10px]">000</span></MiniTool>
        <MiniTool label="Формат по образцу"><BrushIcon /></MiniTool>
      </div>
      <div className="flex h-6 items-center">
        <MiniTool label="Полужирный" active><SerifGlyph>Ж</SerifGlyph></MiniTool>
        <MiniTool label="Курсив"><SerifGlyph className="italic">К</SerifGlyph></MiniTool>
        <MiniTool label="По центру" active><Lines d={LINES.center} /></MiniTool>
        <MiniTool label="Границы" width="w-[34px]" arrow><BordersIcon /></MiniTool>
        <MiniTool label="Цвет заливки" width="w-[34px]" arrow><FillIcon /></MiniTool>
        <MiniTool label="Цвет текста" width="w-[34px]" arrow><FontColorIcon /></MiniTool>
        <MiniTool label="Увеличить разрядность"><DecimalIcon /></MiniTool>
        <MiniTool label="Уменьшить разрядность"><DecimalIcon less /></MiniTool>
        <MiniTool label="Объединить"><MergeIcon /></MiniTool>
      </div>
    </div>
  );
}

interface MenuItem {
  text: [string, string, string];
  icon?: ReactNode;
  marked?: boolean;
}

const MENU: MenuItem[][] = [
  [
    { text: ["В", "ы", "резать"], icon: <CutIcon /> },
    { text: ["", "К", "опировать"], icon: <CopyIcon /> },
    { text: ["Вст", "а", "вить"], icon: <PasteSmallIcon />, marked: true },
    { text: ["Специальная вс", "т", "авка..."] },
  ],
  [
    { text: ["Вставить скопированные ", "я", "чейки"] },
    { text: ["", "У", "далить"] },
    { text: ["Очистить содер", "ж", "имое"] },
  ],
  [
    { text: ["Формат ", "я", "чеек..."], icon: <FormatHandIcon /> },
    { text: ["Ш", "и", "рина столбца..."] },
    { text: ["Скр", "ы", "ть"] },
    { text: ["", "О", "тобразить"] },
  ],
];

function ContextMenu() {
  return (
    <div className="absolute left-[717px] top-[212px] w-[249px] rounded-[3px] border border-[#8a8a8a] bg-[linear-gradient(to_right,#e9eeee_25px,#c5cbcb_25px,#c5cbcb_26px,#fafafa_26px)] py-px shadow-[3px_3px_3px_rgba(0,0,0,0.4)]">
      {MENU.map((items, i) => (
        <div key={i}>
          {i > 0 && <hr className="ml-[33px] mr-px mb-px border-t border-[#c5c5c5]" />}
          {items.map(({ text, icon, marked }) => (
            <button key={text.join("")} type="button" className="relative flex h-[22px] w-full items-center text-[#0a1a70]">
              <span className="flex w-[34px] justify-start pl-1.5">{icon}</span>
              <span>
                {text[0]}
                <u>{text[1]}</u>
                {text[2]}
              </span>
              {marked && <span className="absolute -inset-y-1 left-[26px] right-px border-3 border-[#fb4343]" />}
            </button>
          ))}
        </div>
      ))}
    </div>
  );
}

export default function App() {
  return (
    <div className="relative flex h-screen flex-col overflow-hidden font-['Open_Sans','Noto_Sans',sans-serif] text-[11px]">
      <TitleBar />
      <RibbonTabs />
      <Ribbon />
      <FormulaBar />
      <main className="flex min-h-0 flex-1">
        <Sheet />
        <VerticalScroll />
      </main>
      <SheetTabs />
      <StatusBar />

      <button type="button" aria-label="Office" className="absolute left-0.5 top-[3px]">
        <OfficeLogo />
      </button>
      <MiniToolbar />
      <ContextMenu />
      {/* frame round the selected column */}
      <div className="pointer-events-none absolute left-[590px] top-[168px] bottom-10 w-[135px] border-3 border-[#fb4343]" />
    </div>
  );
}
